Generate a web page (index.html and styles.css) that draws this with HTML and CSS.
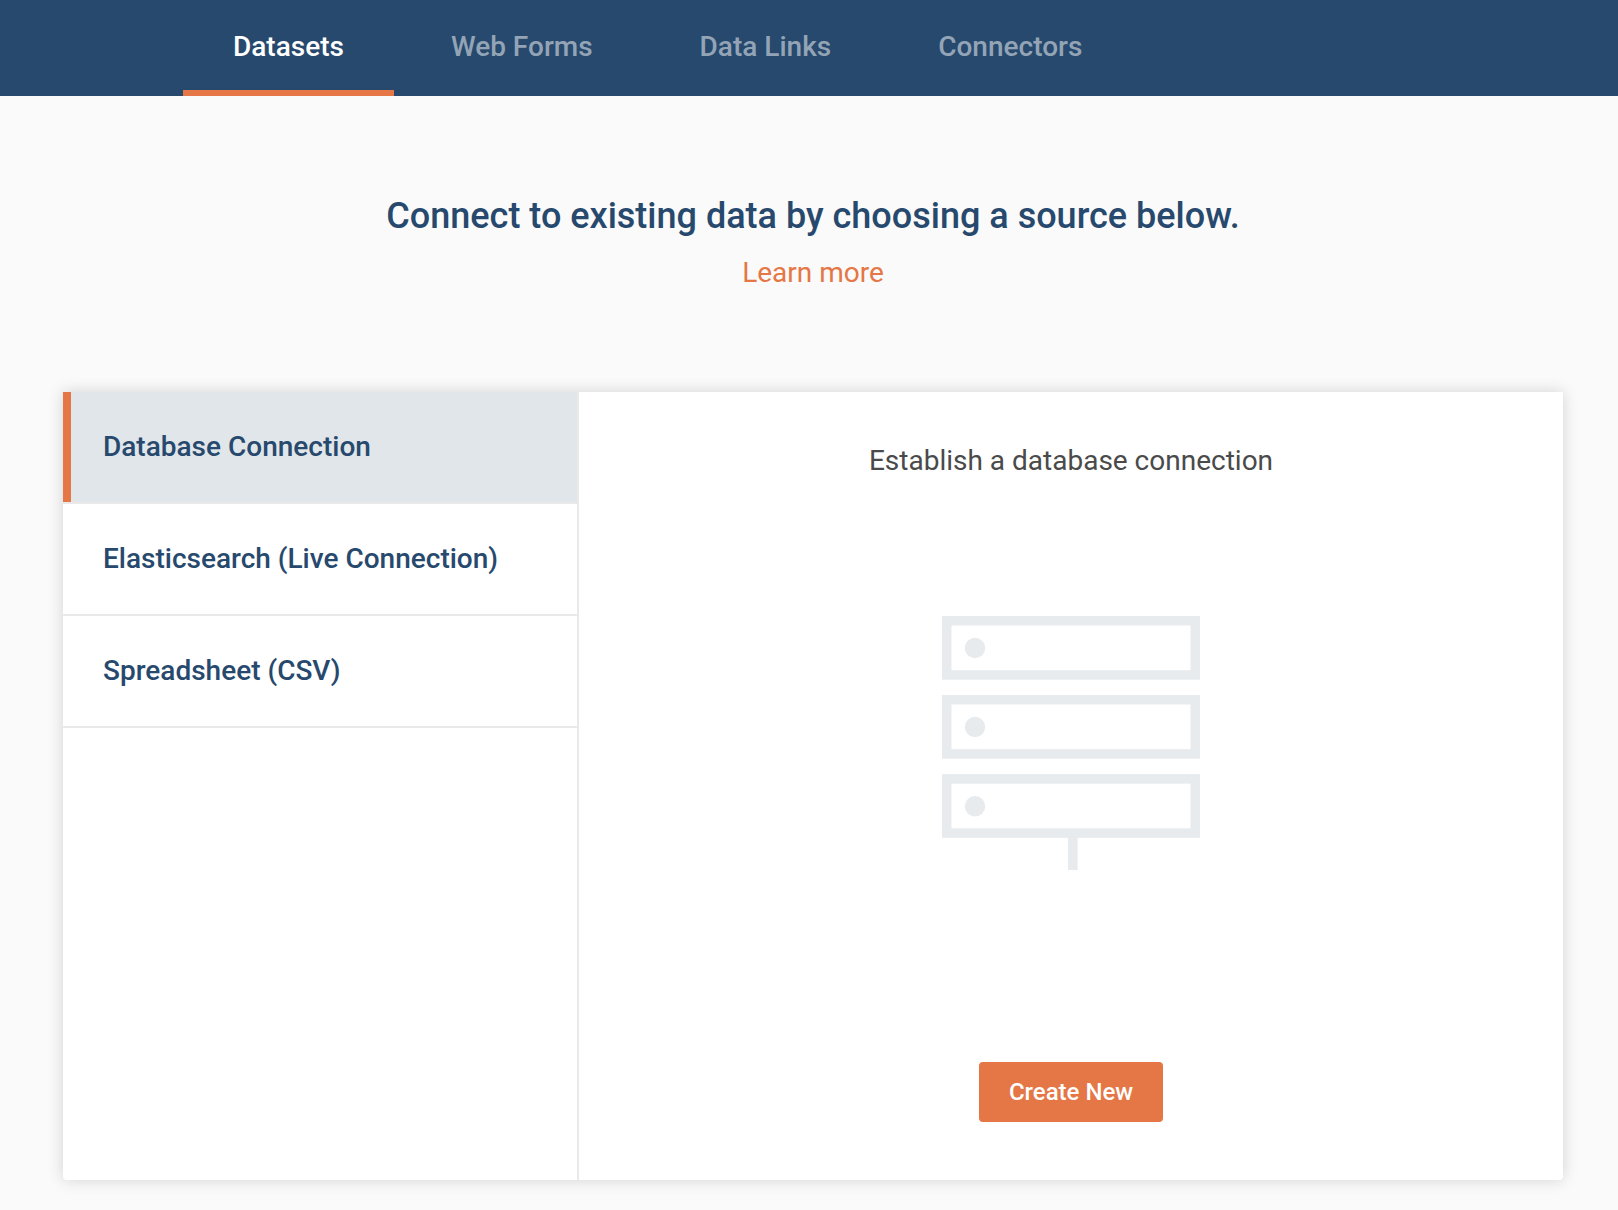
FILE: index.html
```html
<!DOCTYPE html>
<html lang="en">
<head>
<meta charset="utf-8">
<meta name="viewport" content="width=device-width, initial-scale=1">
<title>Datasets</title>
<link rel="stylesheet" href="styles.css">
</head>
<body>
<nav class="topnav" aria-label="Main">
  <a class="topnav-tab is-active" href="#datasets" aria-current="page">Datasets</a>
  <a class="topnav-tab" href="#web-forms">Web Forms</a>
  <a class="topnav-tab" href="#data-links">Data Links</a>
  <a class="topnav-tab" href="#connectors">Connectors</a>
</nav>
<main class="page">
  <header class="intro">
    <h1 class="intro-title">Connect to existing data by choosing a source below.</h1>
    <a class="intro-link" href="#learn-more">Learn more</a>
  </header>
  <div class="card">
    <div class="sources">
      <button class="source is-active" type="button">Database Connection</button>
      <button class="source" type="button">Elasticsearch (Live Connection)</button>
      <button class="source" type="button">Spreadsheet (CSV)</button>
    </div>
    <section class="detail">
      <p class="detail-text">Establish a database connection</p>
      <svg class="detail-art" width="258" height="254" viewBox="0 0 258 254" aria-hidden="true">
        <g fill="none" stroke="#e7ebee" stroke-width="9.5">
          <rect x="4.75" y="4.75" width="248.5" height="54.2"/>
          <rect x="4.75" y="83.75" width="248.5" height="54.2"/>
          <rect x="4.75" y="162.9" width="248.5" height="54.2"/>
        </g>
        <g fill="#e7ebee">
          <circle cx="33" cy="32" r="10.2"/>
          <circle cx="33" cy="111" r="10.2"/>
          <circle cx="33" cy="190.2" r="10.2"/>
          <rect x="126" y="221" width="9.6" height="33"/>
        </g>
      </svg>
      <button class="create" type="button">Create New</button>
    </section>
  </div>
</main>
</body>
</html>
```
FILE: styles.css
```css
* {
  box-sizing: border-box;
}

body {
  margin: 0;
  background: #fafafa;
  color: #4a4a4a;
  font-family: Roboto, "Liberation Sans", sans-serif;
  font-size: 28px;
  line-height: 32px;
}

.topnav {
  display: flex;
  gap: 7px;
  height: 96px;
  padding-left: 183px;
  background: #27496d;
}

.topnav-tab {
  padding: 31px 50px 27px;
  border-bottom: 6px solid transparent;
  color: #93a4b6;
  font-weight: 500;
  text-decoration: none;
}

.topnav-tab.is-active {
  border-bottom-color: #e57645;
  color: #fff;
}

.page {
  padding: 96px 55px 30px 63px;
}

.intro {
  display: flex;
  flex-direction: column;
  align-items: center;
  gap: 17px;
  margin-bottom: 103px;
}

.intro-title {
  margin: 0;
  color: #27496d;
  font-size: 36px;
  font-weight: 500;
  line-height: 48px;
}

.intro-link {
  color: #e57645;
  text-decoration: none;
}

.card {
  display: flex;
  min-height: 788px;
  border-radius: 0 0 4px 4px;
  background: #fff;
  box-shadow: 0 0 16px rgba(0, 0, 0, 0.16);
}

.sources {
  display: flex;
  flex: 0 0 516px;
  flex-direction: column;
  border-right: 2px solid #e9e9e9;
}

.source {
  height: 112px;
  padding: 0 40px;
  border: 0;
  border-bottom: 2px solid #e9e9e9;
  background: #fff;
  color: #27496d;
  font: inherit;
  font-weight: 500;
  text-align: left;
}

.source.is-active {
  background: #e1e6ea;
  box-shadow: inset 8px 0 #e57645;
}

.detail {
  display: flex;
  flex: 1;
  flex-direction: column;
  align-items: center;
  justify-content: space-between;
  padding: 53px 40px 58px;
}

.detail-text {
  margin: 0;
}

.detail-art {
  margin-bottom: 54px;
}

.create {
  height: 60px;
  padding: 0 30px;
  border: 0;
  border-radius: 4px;
  background: #e57645;
  color: #fff;
  font: inherit;
  font-size: 24px;
  font-weight: 500;
}
```
